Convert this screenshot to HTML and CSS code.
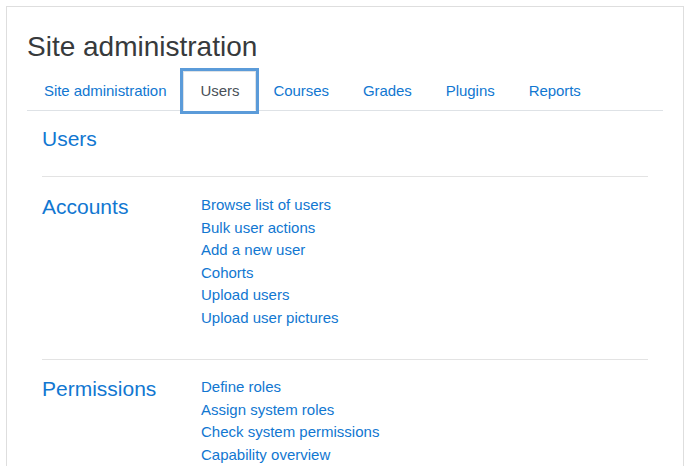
FILE: index.html
```html
<!DOCTYPE html>
<html>
<head>
<meta charset="utf-8">
<link rel="stylesheet" href="styles.css">
</head>
<body>
<div class="card">
  <h2 class="page-title">Site administration</h2>
  <ul class="tabs">
    <li><a class="tab" href="#">Site administration</a></li>
    <li><a class="tab active" href="#">Users</a></li>
    <li><a class="tab" href="#">Courses</a></li>
    <li><a class="tab" href="#">Grades</a></li>
    <li><a class="tab" href="#">Plugins</a></li>
    <li><a class="tab" href="#">Reports</a></li>
  </ul>
  <div class="tab-content">
    <h3 class="section-title">Users</h3>
    <hr class="sep">
    <div class="row first">
      <h4 class="cat-title">Accounts</h4>
      <ul class="links">
        <li><a href="#">Browse list of users</a></li>
        <li><a href="#">Bulk user actions</a></li>
        <li><a href="#">Add a new user</a></li>
        <li><a href="#">Cohorts</a></li>
        <li><a href="#">Upload users</a></li>
        <li><a href="#">Upload user pictures</a></li>
      </ul>
    </div>
    <hr class="sep">
    <div class="row">
      <h4 class="cat-title">Permissions</h4>
      <ul class="links">
        <li><a href="#">Define roles</a></li>
        <li><a href="#">Assign system roles</a></li>
        <li><a href="#">Check system permissions</a></li>
        <li><a href="#">Capability overview</a></li>
      </ul>
    </div>
  </div>
</div>
</body>
</html>
```

FILE: styles.css
```css
html, body {
  margin: 0;
  padding: 0;
  background: #fff;
}
body {
  font-family: "Liberation Sans", Arial, sans-serif;
  font-size: 15px;
  line-height: 1.5;
  color: #373a3c;
  padding: 6px 5px 0 6px;
  overflow: hidden;
  height: 460px;
}
.card {
  border: 1px solid #dedede;
  padding: 23px 20px 20px 20px;
  min-height: 600px;
}
.page-title {
  margin: 0 0 7px 0;
  font-size: 28px;
  font-weight: 400;
  line-height: 1.2;
  color: #373a3c;
}
.tabs {
  list-style: none;
  margin: 0;
  padding: 0;
  display: flex;
  border-bottom: 1px solid #dee2e6;
}
.tab {
  display: block;
  padding: 8px 16px;
  border: 1px solid transparent;
  margin-bottom: -1px;
  color: #1177d1;
  text-decoration: none;
  letter-spacing: -0.05px;
}
.tab.active {
  color: #495057;
  background: #fff;
  border-color: #dee2e6 #dee2e6 #fff;
  outline: 3px solid #5b9bd9;
}
.tab-content {
  padding: 15px 15px 0 15px;
}
.section-title {
  margin: 0 0 25px 0;
  font-size: 21px;
  font-weight: 400;
  line-height: 1.2;
  color: #1177d1;
}
.sep {
  margin: 16px 0;
  border: 0;
  border-top: 1px solid #e3e3e3;
}
.row {
  display: grid;
  grid-template-columns: 144px 1fr;
  column-gap: 15px;
}
.row.first {
  padding-top: 1px;
}
.row.first .links {
  margin-bottom: 14px;
}
.cat-title {
  margin: 0;
  font-size: 21px;
  font-weight: 400;
  line-height: 1.2;
  color: #1177d1;
}
.links {
  list-style: none;
  margin: 0 0 16px 0;
  padding: 0;
}
.links a {
  color: #1177d1;
  text-decoration: none;
}
```
